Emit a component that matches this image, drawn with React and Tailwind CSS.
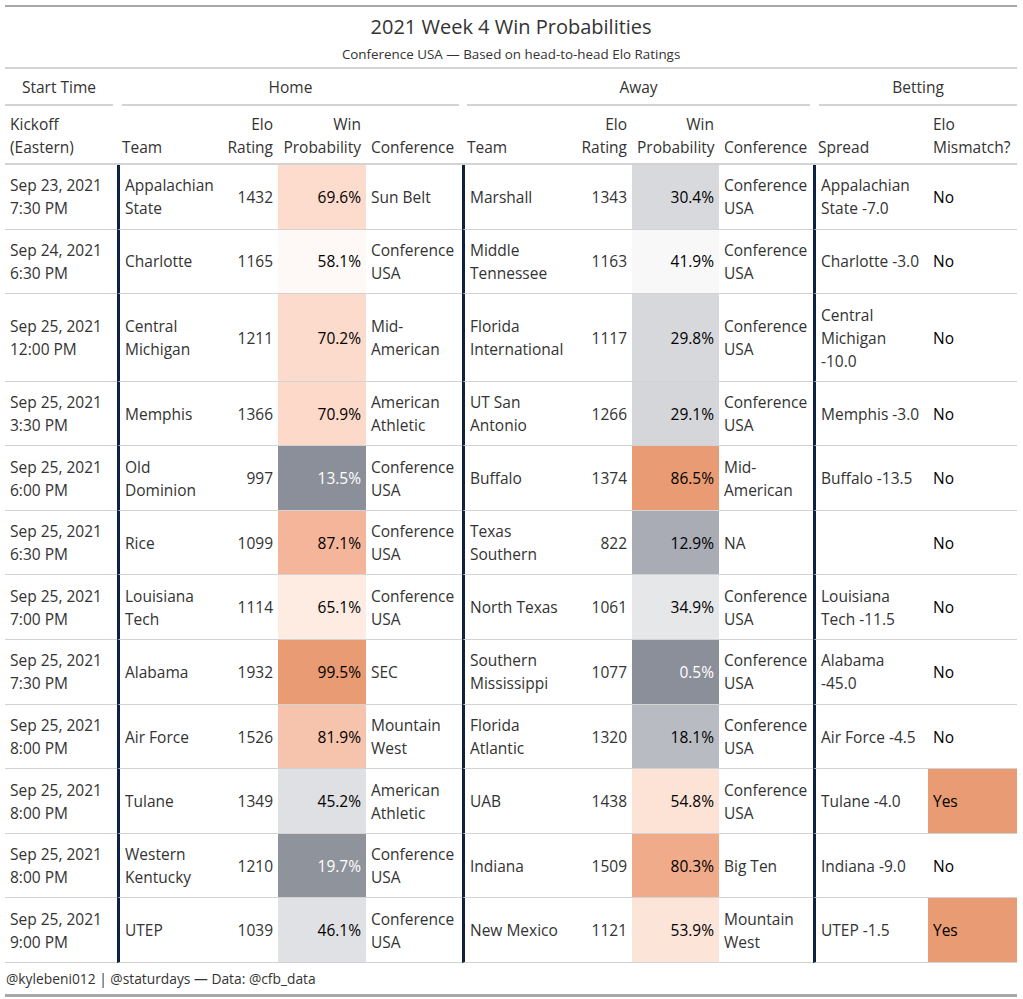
import React from "react";

const CONF = ["Conference", "USA"];

const rows = [
  { kick: ["Sep 23, 2021", "7:30 PM"], home: ["Appalachian", "State"], helo: "1432", hwp: "69.6%", hbg: "bg-[#fddccd] text-black", hconf: ["Sun Belt"], away: ["Marshall"], aelo: "1343", awp: "30.4%", abg: "bg-[#d8d9dc] text-black", aconf: CONF, spread: ["Appalachian", "State -7.0"], mis: "No" },
  { kick: ["Sep 24, 2021", "6:30 PM"], home: ["Charlotte"], helo: "1165", hwp: "58.1%", hbg: "bg-[#fef9f7] text-black", hconf: CONF, away: ["Middle", "Tennessee"], aelo: "1163", awp: "41.9%", abg: "bg-[#f8f8f9] text-black", aconf: CONF, spread: ["Charlotte -3.0"], mis: "No" },
  { kick: ["Sep 25, 2021", "12:00 PM"], home: ["Central", "Michigan"], helo: "1211", hwp: "70.2%", hbg: "bg-[#fddbcc] text-black", hconf: ["Mid-", "American"], away: ["Florida", "International"], aelo: "1117", awp: "29.8%", abg: "bg-[#d7d8dc] text-black", aconf: CONF, spread: ["Central", "Michigan", "-10.0"], mis: "No" },
  { kick: ["Sep 25, 2021", "3:30 PM"], home: ["Memphis"], helo: "1366", hwp: "70.9%", hbg: "bg-[#fcd9c9] text-black", hconf: ["American", "Athletic"], away: ["UT San", "Antonio"], aelo: "1266", awp: "29.1%", abg: "bg-[#d5d6da] text-black", aconf: CONF, spread: ["Memphis -3.0"], mis: "No" },
  { kick: ["Sep 25, 2021", "6:00 PM"], home: ["Old", "Dominion"], helo: "997", hwp: "13.5%", hbg: "bg-[#8b8f99] text-white", hconf: CONF, away: ["Buffalo"], aelo: "1374", awp: "86.5%", abg: "bg-[#e99b73] text-black", aconf: ["Mid-", "American"], spread: ["Buffalo -13.5"], mis: "No" },
  { kick: ["Sep 25, 2021", "6:30 PM"], home: ["Rice"], helo: "1099", hwp: "87.1%", hbg: "bg-[#f4b59a] text-black", hconf: CONF, away: ["Texas", "Southern"], aelo: "822", awp: "12.9%", abg: "bg-[#a9acb4] text-black", aconf: ["NA"], spread: [""], mis: "No" },
  { kick: ["Sep 25, 2021", "7:00 PM"], home: ["Louisiana", "Tech"], helo: "1114", hwp: "65.1%", hbg: "bg-[#feebe2] text-black", hconf: CONF, away: ["North Texas"], aelo: "1061", awp: "34.9%", abg: "bg-[#e6e7e9] text-black", aconf: CONF, spread: ["Louisiana", "Tech -11.5"], mis: "No" },
  { kick: ["Sep 25, 2021", "7:30 PM"], home: ["Alabama"], helo: "1932", hwp: "99.5%", hbg: "bg-[#e99b73] text-black", hconf: ["SEC"], away: ["Southern", "Mississippi"], aelo: "1077", awp: "0.5%", abg: "bg-[#8b8f99] text-white", aconf: CONF, spread: ["Alabama", "-45.0"], mis: "No" },
  { kick: ["Sep 25, 2021", "8:00 PM"], home: ["Air Force"], helo: "1526", hwp: "81.9%", hbg: "bg-[#f6c3ac] text-black", hconf: ["Mountain", "West"], away: ["Florida", "Atlantic"], aelo: "1320", awp: "18.1%", abg: "bg-[#b9bbc2] text-black", aconf: CONF, spread: ["Air Force -4.5"], mis: "No" },
  { kick: ["Sep 25, 2021", "8:00 PM"], home: ["Tulane"], helo: "1349", hwp: "45.2%", hbg: "bg-[#dfe0e3] text-black", hconf: ["American", "Athletic"], away: ["UAB"], aelo: "1438", awp: "54.8%", abg: "bg-[#fde2d6] text-black", aconf: CONF, spread: ["Tulane -4.0"], mis: "Yes" },
  { kick: ["Sep 25, 2021", "8:00 PM"], home: ["Western", "Kentucky"], helo: "1210", hwp: "19.7%", hbg: "bg-[#8f939c] text-white", hconf: CONF, away: ["Indiana"], aelo: "1509", awp: "80.3%", abg: "bg-[#f0ab8b] text-black", aconf: ["Big Ten"], spread: ["Indiana -9.0"], mis: "No" },
  { kick: ["Sep 25, 2021", "9:00 PM"], home: ["UTEP"], helo: "1039", hwp: "46.1%", hbg: "bg-[#e0e1e4] text-black", hconf: CONF, away: ["New Mexico"], aelo: "1121", awp: "53.9%", abg: "bg-[#fde4d9] text-black", aconf: ["Mountain", "West"], spread: ["UTEP -1.5"], mis: "Yes" },
];

const Lines = ({ lines }) =>
  lines.map((l, i) => (
    <div key={i} className="whitespace-nowrap">
      {l}
    </div>
  ));

const td = "px-[5px] pt-[9.4px] pb-[8.2px] align-middle border-b border-[#d3d3d3]";
const navy = "border-l-[3px] border-l-[#0f2140]";

export default function App() {
  return (
    <div
      className="bg-white text-[#333333] p-[5px] pr-[6px]"
      style={{ fontFamily: '"Open Sans", "Noto Sans", sans-serif' }}
    >
      <table className="w-[1012px] table-fixed border-separate border-spacing-0 border-t-2 border-[#a8a8a8] text-[15.5px] leading-[23px]">
        <colgroup>
          <col className="w-[112px]" />
          <col className="w-[98px]" />
          <col className="w-[63px]" />
          <col className="w-[88px]" />
          <col className="w-[96px]" />
          <col className="w-[108px]" />
          <col className="w-[62px]" />
          <col className="w-[87px]" />
          <col className="w-[94px]" />
          <col className="w-[115px]" />
          <col className="w-[89px]" />
        </colgroup>
        <thead>
          <tr>
            <th colSpan={11} className="font-normal text-center border-b-2 border-[#d3d3d3] pt-[6px] pb-[3px]">
              <div className="text-[20px] leading-[28px]">2021 Week 4 Win Probabilities</div>
              <div className="text-[13.4px] leading-[20px] pt-[3px]">Conference USA — Based on head-to-head Elo Ratings</div>
            </th>
          </tr>
          <tr>
            <th className="font-normal pt-[7px] pr-[4px]">
              <div className="border-b-2 border-[#d3d3d3] pb-[5px]">Start Time</div>
            </th>
            <th colSpan={4} className="font-normal pt-[7px] pl-[5px] pr-[3px]">
              <div className="border-b-2 border-[#d3d3d3] pb-[5px]">Home</div>
            </th>
            <th colSpan={4} className="font-normal pt-[7px] pl-[5px] pr-[3px]">
              <div className="border-b-2 border-[#d3d3d3] pb-[5px]">Away</div>
            </th>
            <th colSpan={2} className="font-normal pt-[7px] pl-[6px]">
              <div className="border-b-2 border-[#d3d3d3] pb-[5px]">Betting</div>
            </th>
          </tr>
          <tr className="align-bottom">
            {[
              ["Kickoff (Eastern)", "text-left"],
              ["Team", "text-left"],
              ["Elo Rating", "text-right"],
              ["Win Probability", "text-right"],
              ["Conference", "text-left"],
              ["Team", "text-left"],
              ["Elo Rating", "text-right"],
              ["Win Probability", "text-right"],
              ["Conference", "text-left"],
              ["Spread", "text-left"],
              ["Elo Mismatch?", "text-left"],
            ].map(([label, align], i) => (
              <th
                key={i}
                className={`font-normal px-[5px] pt-[7px] pb-[4px] border-b-2 border-[#d3d3d3] ${align}`}
              >
                {label}
              </th>
            ))}
          </tr>
        </thead>
        <tbody>
          {rows.map((r, i) => (
            <tr key={i}>
              <td className={td}>
                <Lines lines={r.kick} />
              </td>
              <td className={`${td} ${navy}`}>
                <Lines lines={r.home} />
              </td>
              <td className={`${td} text-right`}>{r.helo}</td>
              <td className={`${td} text-right ${r.hbg}`}>{r.hwp}</td>
              <td className={td}>
                <Lines lines={r.hconf} />
              </td>
              <td className={`${td} ${navy}`}>
                <Lines lines={r.away} />
              </td>
              <td className={`${td} text-right`}>{r.aelo}</td>
              <td className={`${td} text-right ${r.abg}`}>{r.awp}</td>
              <td className={td}>
                <Lines lines={r.aconf} />
              </td>
              <td className={`${td} ${navy}`}>
                <Lines lines={r.spread} />
              </td>
              <td className={`${td} text-black ${r.mis === "Yes" ? "bg-[#e99b73]" : ""}`}>{r.mis}</td>
            </tr>
          ))}
        </tbody>
        <tfoot>
          <tr>
            <td colSpan={11} className="pl-[1px] pr-[5px] pt-[5px] pb-[4px] text-[13.8px] leading-[22px] border-b-[3px] border-[#a8a8a8]">
              @kylebeni012 | @staturdays — Data: @cfb_data
            </td>
          </tr>
        </tfoot>
      </table>
    </div>
  );
}
